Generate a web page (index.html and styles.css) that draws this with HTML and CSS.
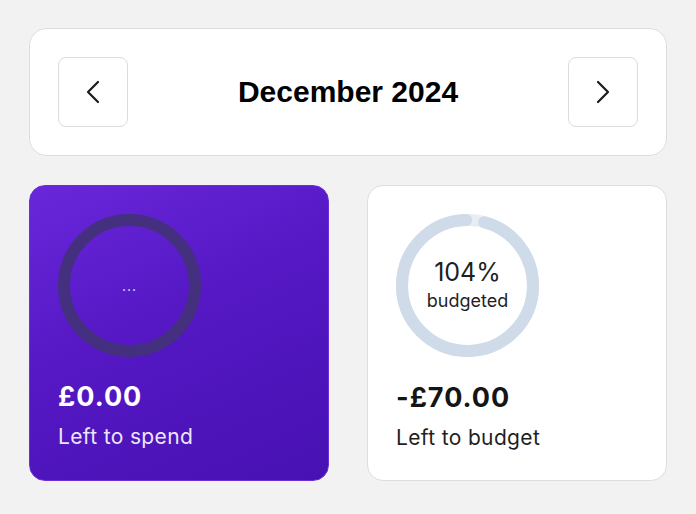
FILE: index.html
```html
<!DOCTYPE html>
<html>
<head>
<meta charset="utf-8">
<link rel="stylesheet" href="styles.css">
</head>
<body>
<div class="page">
  <header class="month-bar">
    <button class="nav-btn" aria-label="Previous month">
      <svg width="40" height="40" viewBox="0 0 24 24" fill="none" stroke="#1a1a1a" stroke-width="1.3" stroke-linecap="round" stroke-linejoin="round"><path d="M15 18l-6-6 6-6"/></svg>
    </button>
    <h1 class="month-title">December 2024</h1>
    <button class="nav-btn" aria-label="Next month">
      <svg width="40" height="40" viewBox="0 0 24 24" fill="none" stroke="#1a1a1a" stroke-width="1.3" stroke-linecap="round" stroke-linejoin="round"><path d="M9 18l6-6-6-6"/></svg>
    </button>
  </header>

  <section class="cards">
    <div class="card card-spend">
      <div class="ring">
        <svg width="143" height="143" viewBox="0 0 143 143">
          <circle cx="71.5" cy="71.5" r="65.5" fill="none" stroke="#44307f" stroke-width="12"/>
        </svg>
        <div class="ring-label"><span class="dots">...</span></div>
      </div>
      <div class="amount">£0.00</div>
      <div class="caption">Left to spend</div>
    </div>

    <div class="card card-budget">
      <div class="ring">
        <svg width="143" height="143" viewBox="0 0 143 143">
          <circle cx="71.5" cy="71.5" r="65.5" fill="none" stroke="#e8edf4" stroke-width="12"/>
          <circle class="progress" cx="71.5" cy="71.5" r="65.5" fill="none" stroke="#cfdbe9" stroke-width="12" stroke-linecap="round" stroke-dasharray="392.5 19" stroke-dashoffset="-17" transform="rotate(-90 71.5 71.5)"/>
        </svg>
        <div class="ring-label">
          <span class="pct">104%</span>
          <span class="pct-sub">budgeted</span>
        </div>
      </div>
      <div class="amount">-£70.00</div>
      <div class="caption">Left to budget</div>
    </div>
  </section>
</div>
</body>
</html>
```

FILE: styles.css
```css
* { box-sizing: border-box; }

html, body {
  margin: 0;
  padding: 0;
  background: #f2f2f2;
}

body {
  font-family: Inter, "Noto Sans", sans-serif;
  color: #1a1a1a;
}

.page {
  padding: 28px 29px;
  width: 696px;
}

.month-bar {
  background: #ffffff;
  border: 1px solid #dedede;
  border-radius: 18px;
  padding: 28px 28px;
  display: flex;
  align-items: center;
  justify-content: space-between;
}

.nav-btn {
  width: 70px;
  height: 70px;
  background: #ffffff;
  border: 1px solid #dcdcdc;
  border-radius: 8px;
  padding: 0;
  display: flex;
  align-items: center;
  justify-content: center;
}

.month-title {
  margin: 0;
  font-family: "Liberation Sans", Arial, sans-serif;
  font-weight: 700;
  font-size: 30px;
  line-height: 36px;
  color: #000000;
}

.cards {
  margin-top: 29px;
  display: grid;
  grid-template-columns: 300px 300px;
  column-gap: 38px;
}

.card {
  height: 296px;
  border-radius: 16px;
  padding: 28px 28px 0 28px;
  display: flex;
  flex-direction: column;
}

.card-spend {
  background: linear-gradient(155deg, #6927da 0%, #5518c4 45%, #4711b2 100%);
  border: 1px solid #6b2fd6;
  color: #ffffff;
}

.card-budget {
  background: #ffffff;
  border: 1px solid #dedede;
  color: #1a1a1a;
}

.ring {
  position: relative;
  width: 143px;
  height: 143px;
}

.ring svg {
  display: block;
}

.ring-label {
  position: absolute;
  inset: 0;
  display: flex;
  flex-direction: column;
  align-items: center;
  justify-content: center;
}

.dots {
  font-size: 14px;
  line-height: 16px;
  color: #e9e2fb;
  margin-top: 0;
  letter-spacing: 1px;
}

.pct {
  font-size: 25px;
  line-height: 28px;
  color: #1f1f1f;
  margin-top: -2px;
}

.pct-sub {
  font-size: 18px;
  line-height: 22px;
  color: #1f1f1f;
  margin-top: 4px;
}

.amount {
  margin-top: 24px;
  font-size: 27px;
  line-height: 32px;
  font-weight: 700;
  letter-spacing: 1px;
}

.card-spend .amount { color: #ffffff; }
.card-budget .amount { color: #151515; margin-top: 25px; }

.caption {
  margin-top: 12px;
  font-size: 21px;
  line-height: 24px;
  letter-spacing: 0.35px;
}

.card-spend .caption { color: #ece6fb; }
.card-budget .caption { color: #1f1f1f; }
```
